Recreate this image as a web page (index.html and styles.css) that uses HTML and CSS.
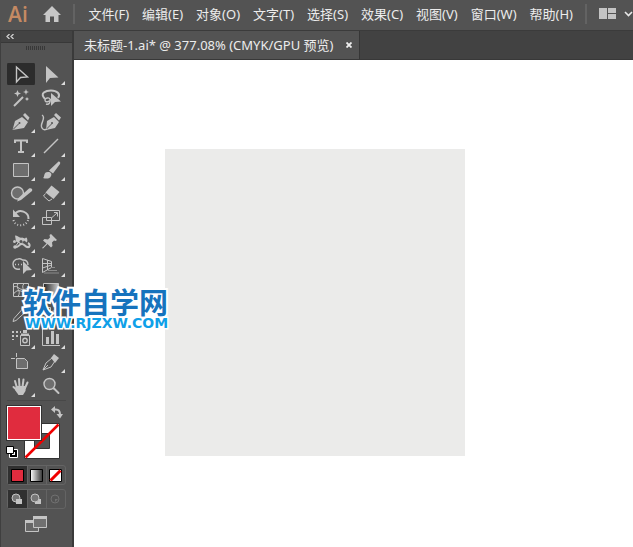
FILE: index.html
```html
<!doctype html>
<html lang="zh-CN">
  <head>
    <meta charset="utf-8" />
    <meta name="viewport" content="width=device-width" />
    <title>未标题-1.ai</title>
    <link rel="stylesheet" href="styles.css" />
  </head>

  <body>
    <header class="menubar">
      <span class="logo">Ai</span>
      <button class="home" aria-label="主页">
        <svg width="18" height="16" viewBox="0 0 18 16">
          <path d="M9 0 18 9H15.500V16H11V10.500H7V16H2.500V9H0z" fill="#c8c8c8" />
        </svg>
      </button>
      <span class="separator"></span>
      <nav class="menu">
        <a href="#">文件(F)</a>
        <a href="#">编辑(E)</a>
        <a href="#">对象(O)</a>
        <a href="#">文字(T)</a>
        <a href="#">选择(S)</a>
        <a href="#">效果(C)</a>
        <a href="#">视图(V)</a>
        <a href="#">窗口(W)</a>
        <a href="#">帮助(H)</a>
      </nav>
      <span class="separator"></span>
      <button class="workspace" aria-label="排列文档">
        <svg width="34" height="12" viewBox="0 0 34 12">
          <path d="M0 0h8v11H0zM9 0h8v5H9zM9 6h8v5H9z" fill="#c4c4c4" />
          <path d="m26 4 3.500 3.500L33 4" fill="none" stroke="#e8e8e8" stroke-width="1.600" />
        </svg>
      </button>
    </header>

    <div class="workarea">
      <aside class="panel">
        <button class="collapse" aria-label="折叠">
          <svg width="8" height="5" viewBox="0 0 8 5">
            <path d="M3.500 0 1 2.500 3.500 5M7.500 0 5 2.500 7.500 5" fill="none" stroke="#d0d0d0" stroke-width="1.300" />
          </svg>
        </button>
        <div class="grip"></div>

        <div class="tools">
          <button class="tool active" aria-label="选择工具">
            <svg viewBox="0 0 28 24">
              <path class="line wide" d="M9.500 5v15l4-4.500 7-.5z" />
            </svg>
          </button>
          <button class="tool more" aria-label="直接选择工具">
            <svg viewBox="0 0 28 24">
              <path d="M9 4v17l4-5 8.500-.5z" />
            </svg>
          </button>
          <button class="tool" aria-label="魔棒工具">
            <svg viewBox="0 0 28 24">
              <path class="thick" d="m7 20 9-9" />
              <path d="m10.500 4 1 2.500 2.500 1-2.500 1-1 2.500-1-2.500-2.500-1 2.500-1zM19 3l.8 2.200L22 6l-2.200.8L19 9l-.8-2.200L16 6l2.200-.8zM20 11l.7 1.300L22 13l-1.300.7L20 15l-.7-1.300L18 13l1.300-.7z" />
            </svg>
          </button>
          <button class="tool" aria-label="套索工具">
            <svg viewBox="0 0 28 24">
              <path class="line heavy" d="M8 13C2 7 9 4.500 14 4.500c6 0 10 3.500 7 7.500" />
              <path class="line wide" d="M9 18c3 1 5-2 4-5-1-2-5-1-5 1 0 3 5 2 6-1" />
              <path d="M14 7v13l4-4 6-.5z" />
            </svg>
          </button>
          <button class="tool more" aria-label="钢笔工具">
            <svg viewBox="0 0 28 24">
              <path d="M5.500 20 8 11l7-4 6 5-4 6zM16 5l2-2 4.500 4.500-1.500 3z" />
              <path class="cut" d="m6 19.500 6-6" />
              <circle cx="12.500" cy="13" r="1" class="hole" />
            </svg>
          </button>
          <button class="tool" aria-label="曲率工具">
            <svg viewBox="0 0 28 24">
              <path d="M9 20 10 11l7-4 5 5-4 6zM17 5l2-2 5 4.500-2 3z" />
              <path class="cut" d="m9 19.500 6-6" />
              <circle cx="15" cy="13" r="1" class="hole" />
              <path class="line wide" d="M5 5c5 3-3 9 0 13 1 2 3 2 5 1" />
            </svg>
          </button>
          <button class="tool more" aria-label="文字工具">
            <svg viewBox="0 0 28 24">
              <path class="line heavy" d="M8 9V6.500h12V9M14 6v12M11 18h6" />
            </svg>
          </button>
          <button class="tool more" aria-label="直线段工具">
            <svg viewBox="0 0 28 24">
              <path class="line wide" d="M7 19 21 5" />
            </svg>
          </button>
          <button class="tool more" aria-label="矩形工具">
            <svg viewBox="0 0 28 24">
              <path class="line tint" d="M6.500 5.500h15v13h-15z" />
            </svg>
          </button>
          <button class="tool more" aria-label="画笔工具">
            <svg viewBox="0 0 28 24">
              <path d="M6 20c2-1 0-6 5-6 3 0 4 2 3 4-1 3-5 3-8 2zM12 12.500 21 4c1-1 3 0 2 2l-7 9.500z" />
            </svg>
          </button>
          <button class="tool more" aria-label="Shaper 工具">
            <svg viewBox="0 0 28 24">
              <circle class="line wide tint" cx="10.500" cy="11" r="6" />
              <path d="m10 19.500 2-4L22 6.500c2-1 4 .5 3 2.500L14 18z" />
            </svg>
          </button>
          <button class="tool more" aria-label="橡皮擦工具">
            <svg viewBox="0 0 28 24">
              <path d="M14.500 3.500 22.500 10l-6 7-8-6.500z" />
              <path class="line" d="m8.500 11.500-2 2.500 5.500 5 3-2" />
            </svg>
          </button>
          <button class="tool more" aria-label="旋转工具">
            <svg viewBox="0 0 28 24">
              <path class="line heavy" d="M8 8c4-6 14-2 13.500 5" />
              <path d="M6 3.500V11h7z" />
              <path class="line heavy dots" d="M21 14c-2 7-13 7-14.500 0" />
            </svg>
          </button>
          <button class="tool more" aria-label="比例缩放工具">
            <svg viewBox="0 0 28 24">
              <path class="line" d="M9.500 4.500h13v10h-13zM5.500 11.500h9v7h-9zM15 11.500l5-4.500M17 6.500h3.500v4" />
            </svg>
          </button>
          <button class="tool more" aria-label="宽度工具">
            <svg viewBox="0 0 28 24">
              <path class="line heavy" d="M8 17c3 1 4-3 7-3s3 4 7 3c1-1 1-3-1-4" />
              <path d="M8 5.500c3 0 4 3 7 2l3 1c2-3 3 2 2 4l-3-2-3 4-5-3z" />
              <path class="line" d="m8 17 5-7" />
              <circle cx="7.500" cy="11.500" r="1.500" />
              <circle cx="8" cy="17" r="1.800" />
              <circle cx="14" cy="11.500" r="1.500" class="hole" />
            </svg>
          </button>
          <button class="tool more" aria-label="操控变形工具">
            <svg viewBox="0 0 28 24">
              <path d="m14 4 6 6-1.500 1-1.500-.5-2 2 .5 3.500-1.500 1.500-3.500-3.500L6 18.500 5 18l4.500-4.500L6 10.500 7.500 9l3.500.5 2-2L12.500 5z" />
            </svg>
          </button>
          <button class="tool more" aria-label="形状生成器工具">
            <svg viewBox="0 0 28 24">
              <path class="line wide" d="M11 5a5 5 0 0 0-5 5c0 4 3 6 7 5M11 5c3-1 4 1 5 1 3 0 5 2 5 5" />
              <path class="line wide dots" d="M8 10.500h8" />
              <path d="M16 7v13l3.500-3.500 5.500-.5z" />
            </svg>
          </button>
          <button class="tool more" aria-label="透视网格工具">
            <svg viewBox="0 0 28 24">
              <path class="line" d="M5.500 4.500v14l9-5V7.500zM5.500 9.500h9M5.500 14l9-3M10.500 6v10" />
              <path class="line faint" d="M14 13.500h4M11 16.500h9M7 19h15" />
            </svg>
          </button>
          <button class="tool" aria-label="网格工具">
            <svg viewBox="0 0 28 24">
              <path class="line" d="M6.500 5.500h15v13h-15zM6.500 9c5-3 5 6 15 1M6.500 16c5-7 8-1 15-1M11 5.500c-3 5 4 7 0 13M17 5.500c-4 5 3 8 0 13" />
            </svg>
          </button>
          <button class="tool" aria-label="渐变工具">
            <svg viewBox="0 0 28 24">
              <defs>
                <linearGradient id="fade">
                  <stop offset="0" stop-color="#222" />
                  <stop offset="1" stop-color="#ccc" />
                </linearGradient>
              </defs>
              <path d="M6.500 5.500h15v13h-15z" fill="url(#fade)" stroke="#c4c4c4" />
            </svg>
          </button>
          <button class="tool more" aria-label="吸管工具">
            <svg viewBox="0 0 28 24">
              <path class="line" d="m6 19.500 1-3 8-9 3 3-9 8z" />
              <path d="m15 5 2 1 2-2c2-2 5 1 3 3l-2 2 1 2-2 1-5-5z" />
            </svg>
          </button>
          <button class="tool more" aria-label="混合工具">
            <svg viewBox="0 0 28 24">
              <circle class="line" cx="17" cy="14" r="5" />
              <path class="line" d="M6.500 5.500h7v7h-7z" />
            </svg>
          </button>
          <button class="tool more" aria-label="符号喷枪工具">
            <svg viewBox="0 0 28 24">
              <path d="M5 5h2v2H5zM9 5h2v2H9zM13 5h1v2h-1zM5 9h2v2H5zM9 9h2v2H9zM5 13h2v1H5zM16 4h4v3h-4zM14 7.500h8V10h-8z" />
              <path class="line" d="M13.500 9.500h9v10h-9z" />
              <circle class="line wide" cx="18" cy="14.500" r="2.200" />
            </svg>
          </button>
          <button class="tool more" aria-label="柱形图工具">
            <svg viewBox="0 0 28 24">
              <path class="line" d="M5.500 3v16.500H23" />
              <path d="M9 11h3v7H9zM14 5h3v13h-3zM19 8h3v10h-3z" />
            </svg>
          </button>
          <button class="tool" aria-label="画板工具">
            <svg viewBox="0 0 28 24">
              <path class="line tint" d="M9.500 8.500h8l3 3v7h-11z" />
              <path class="line" d="M4 8.500h4M9.500 3v4" />
            </svg>
          </button>
          <button class="tool more" aria-label="切片工具">
            <svg viewBox="0 0 28 24">
              <path class="line" d="m6 20 3-7 6-5 3 3-4 6z" />
              <path d="m14 8 3-4 5 4-4 5z" />
              <path class="line" d="m6 20 5-5" />
            </svg>
          </button>
          <button class="tool more" aria-label="抓手工具">
            <svg viewBox="0 0 28 24">
              <path class="line fingers" d="M10 14 8 7M12.500 13l-.5-8M15.500 13l1-7.500M18 14l2.500-5.500M11 17l-4.500-4" />
              <path d="M9 12h10l-.5 5-2.500 4h-4.500L8 16z" />
            </svg>
          </button>
          <button class="tool" aria-label="缩放工具">
            <svg viewBox="0 0 28 24">
              <circle class="line wide tint" cx="12.500" cy="10" r="5.500" />
              <path class="line fingers" d="m17 14.500 4.500 4.500" />
            </svg>
          </button>
        </div>

        <div class="colors">
          <button class="stroke" aria-label="描边">
            <svg width="36" height="36" viewBox="0 0 36 36">
              <path d="M.5.5h35v35H.5z" fill="#fff" stroke="#333" />
              <path d="M10.500 10.500h15v15h-15z" fill="#535353" stroke="#333" />
              <path d="M1.500 34.500 34.500 1.500" stroke="#f00000" stroke-width="2.500" />
            </svg>
          </button>
          <button class="fill" aria-label="填色"></button>
          <button class="swap" aria-label="互换填色和描边">
            <svg width="12" height="13" viewBox="0 0 12 13">
              <path d="M3 3.500h2c3 0 4 2 4 5" fill="none" stroke="#c4c4c4" stroke-width="2" />
              <path d="M0 3.500 4 0v7zM5.500 8H12l-3 4.500z" fill="#c4c4c4" />
            </svg>
          </button>
          <button class="defaults" aria-label="默认填色和描边">
            <svg width="12" height="12" viewBox="0 0 12 12">
              <path d="M3.500 3.500h8v8h-8z" stroke="#fff" fill="#000" />
              <path d="M6 6h3v3H6z" fill="#fff" />
              <path d="M.5.5h7v7h-7z" fill="#fff" stroke="#000" />
            </svg>
          </button>
        </div>

        <div class="modes">
          <button class="active" aria-label="颜色">
            <svg viewBox="0 0 18 18"><path d="M2.500 3.500h12v12h-12z" fill="#e02c3e" stroke="#000" /></svg>
          </button>
          <button aria-label="渐变">
            <svg viewBox="0 0 18 18">
              <defs>
                <linearGradient id="ramp">
                  <stop offset="0" stop-color="#fff" />
                  <stop offset="1" stop-color="#333" />
                </linearGradient>
              </defs>
              <path d="M2.500 3.500h12v12h-12z" fill="url(#ramp)" stroke="#000" />
            </svg>
          </button>
          <button aria-label="无">
            <svg viewBox="0 0 18 18">
              <path d="M2.500 3.500h12v12h-12z" fill="#fff" stroke="#000" />
              <path d="m3.500 14.500 10-10" stroke="#f00000" stroke-width="3" />
            </svg>
          </button>
        </div>

        <div class="modes drawing">
          <button class="active" aria-label="正常绘图">
            <svg viewBox="0 0 18 18">
              <circle cx="7" cy="8" r="4" fill="#777" stroke="#c4c4c4" />
              <path d="M7 9h6v5H7z" fill="#c4c4c4" />
            </svg>
          </button>
          <button aria-label="背面绘图">
            <svg viewBox="0 0 18 18">
              <path d="M7 9h6v5H7z" fill="#c4c4c4" />
              <circle cx="7" cy="8" r="4" fill="#777" stroke="#c4c4c4" />
            </svg>
          </button>
          <button aria-label="内部绘图" disabled>
            <svg viewBox="0 0 18 18">
              <circle cx="8" cy="9" r="4" fill="none" stroke="#707070" />
              <path d="M8 9h3l-3 3z" fill="#707070" />
            </svg>
          </button>
        </div>

        <button class="screen" aria-label="更改屏幕模式">
          <svg width="22" height="16" viewBox="0 0 22 16">
            <path d="M.5 4.500h13v11H.5z" fill="#666" stroke="#c4c4c4" />
            <path d="M0 4h14v3H0z" fill="#c4c4c4" />
            <path d="M8.500.5h13v11h-13z" fill="#707070" stroke="#c4c4c4" />
            <path d="M8 0h14v3H8z" fill="#c4c4c4" />
          </svg>
        </button>
      </aside>

      <main class="document">
        <div class="tabs">
          <div class="tab">
            <span>未标题-1.ai* @ 377.08% (CMYK/GPU 预览)</span>
            <button aria-label="关闭">
              <svg width="6" height="6" viewBox="0 0 6 6">
                <path d="m.5.5 5 5M5.500.5l-5 5" stroke="#f0f0f0" stroke-width="1.800" />
              </svg>
            </button>
          </div>
        </div>
        <div class="canvas">
          <div class="artboard"></div>
        </div>
      </main>
    </div>

    <div class="watermark">
      <strong>软件自学网</strong>
      <span>WWW.RJZXW.COM</span>
    </div>
  </body>
</html>
```
FILE: styles.css
```css
* {
  box-sizing: border-box;
}

body {
  display: flex;
  flex-direction: column;
  min-height: 100vh;
  margin: 0;
  background: #535353;
  color: #ececec;
  font: 13px/18px "Noto Sans", "Noto Sans CJK SC", sans-serif;
}

button {
  display: flex;
  align-items: center;
  justify-content: center;
  margin: 0;
  padding: 0;
  border: 0;
  background: none;
}

svg {
  display: block;
}

.menubar {
  display: flex;
  align-items: center;
  height: 31px;
  padding: 0 0 3px 8px;
  border-bottom: 1px solid #3b3b3b;
}

.logo {
  width: 35px;
  color: #c58a63;
  font: 600 21px/24px "Open Sans", sans-serif;
}

.separator {
  flex: none;
  width: 2px;
  height: 20px;
  margin-left: 12px;
  background: #636363;
}

.menu {
  display: flex;
  gap: 13px;
  margin-left: 14px;
}

.menu a {
  color: inherit;
  text-decoration: none;
  white-space: nowrap;
}

.workspace {
  margin-left: 12px;
}

.workarea {
  display: flex;
  flex: 1;
}

/* tool panel */
.panel {
  flex: none;
  width: 74px;
  border-right: 2px solid #3a3a3a;
  border-left: 1px solid #3f3f3f;
}

.collapse {
  justify-content: flex-start;
  width: 100%;
  height: 12px;
  padding-left: 5px;
  border-bottom: 1px solid #383838;
  background: #434343;
}

.grip {
  width: 20px;
  height: 4px;
  margin: 3px auto 12px 25px;
  background: repeating-linear-gradient(90deg, #383838 0 1px, #535353 1px 2px);
}

.tools {
  display: grid;
  grid-template-columns: 28px 28px;
  column-gap: 2px;
  margin-left: 6px;
}

.tool {
  position: relative;
  height: 24px;
}

.tool svg {
  width: 28px;
  height: 24px;
  fill: #c4c4c4;
}

.tool.active svg {
  border-radius: 3px;
  background: linear-gradient(#2c2c2c, #2c2c2c) center / 28px 22px no-repeat;
}

.tool.more::after {
  position: absolute;
  right: 0;
  bottom: 1px;
  border: 2px solid transparent;
  border-right-color: #dcdcdc;
  border-bottom-color: #dcdcdc;
  content: "";
}

.tool .line {
  fill: none;
  stroke: #c4c4c4;
}

.tool .tint {
  fill: #6e6e6e;
}

.tool .wide {
  stroke-width: 1.4;
}

.tool .heavy {
  stroke-width: 2;
}

.tool .thick {
  stroke: #c4c4c4;
  stroke-width: 2;
}

.tool .fingers {
  stroke-linecap: round;
  stroke-width: 2;
}

.tool .dots {
  stroke-dasharray: 1 2;
}

.tool .faint {
  stroke: #8c8c8c;
}

.tool .cut {
  stroke: #535353;
}

.tool .hole {
  fill: #535353;
}

/* fill and stroke proxies overlap each other */
.colors {
  position: relative;
  height: 65px;
  margin: 2px 6px 0;
  border-top: 1px solid #484848;
}

.colors button {
  position: absolute;
}

.colors .fill {
  top: 4px;
  left: -1px;
  width: 36px;
  height: 36px;
  border: 1px solid #333;
  background: #e02c3e;
  box-shadow: inset 0 0 0 1px #fff;
}

.colors .stroke {
  top: 22px;
  left: 17px;
}

.colors .swap {
  top: 5px;
  left: 44px;
}

.colors .defaults {
  top: 45px;
  left: -1px;
}

.modes {
  display: grid;
  grid-template-columns: repeat(3, 1fr);
  width: 59px;
  height: 20px;
  margin: 0 0 4px 6px;
  border: 1px solid #646464;
  border-radius: 3px;
}

.modes button + button {
  border-left: 1px solid #646464;
}

.modes .active {
  background: #303030;
}

.modes svg {
  width: 18px;
  height: 18px;
}

.screen {
  margin: 7px 0 0 24px;
}

/* document window */
.document {
  display: flex;
  flex: 1;
  flex-direction: column;
  min-width: 0;
}

.tabs {
  display: flex;
  height: 29px;
  border-bottom: 1px solid #383838;
  background: #424242;
}

.tab {
  display: flex;
  align-items: center;
  gap: 13px;
  padding: 0 7px 0 10px;
  border-right: 1px solid #363636;
  background: #535353;
  white-space: nowrap;
}

.canvas {
  flex: 1;
  padding: 89px 91px;
  background: #fff;
}

.artboard {
  width: 100%;
  max-width: 300px;
  height: 307px;
  background: #ebebea;
}

/* site mark laid over the window */
.watermark {
  position: absolute;
  top: 284px;
  left: 23px;
  color: #1673bd;
  paint-order: stroke fill;
  -webkit-text-stroke: 4px #fff;
}

.watermark strong,
.watermark span {
  display: block;
  white-space: nowrap;
}

.watermark strong {
  font: bold 29px/34px "Noto Sans CJK SC", sans-serif;
}

.watermark span {
  margin-left: 2px;
  color: #0fa0e8;
  font: bold 14px/10px "DejaVu Sans", sans-serif;
  -webkit-text-stroke-width: 3px;
}
```
